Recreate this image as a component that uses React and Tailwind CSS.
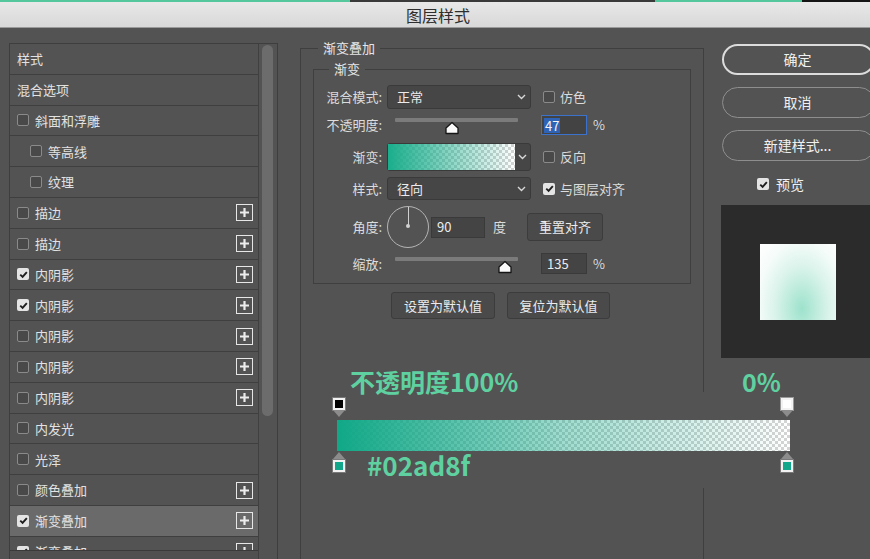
import React from 'react';

const Check = ({ on }) =>
  on ? (
    <span className="w-[12px] h-[12px] shrink-0 rounded-[2px] bg-[#e4e4e4] flex items-center justify-center">
      <svg width="9" height="9" viewBox="0 0 10 10">
        <path d="M1.4 5.2 L4 7.7 L8.7 2.3" stroke="#1e1e1e" strokeWidth="2.1" fill="none" />
      </svg>
    </span>
  ) : (
    <span className="w-[12px] h-[12px] shrink-0 rounded-[2px] border border-[#8a8a8a] bg-[#494949]" />
  );

const PlusBox = () => (
  <span className="w-[17px] h-[17px] border-[1.5px] border-[#e6e6e6] flex items-center justify-center">
    <svg width="11" height="11" viewBox="0 0 11 11">
      <path d="M5.5 1v9M1 5.5h9" stroke="#ececec" strokeWidth="2.2" />
    </svg>
  </span>
);

const Chevron = () => (
  <svg width="9" height="6" viewBox="0 0 9 6">
    <path d="M1 1 L4.5 4.5 L8 1" stroke="#d8d8d8" strokeWidth="1.4" fill="none" />
  </svg>
);

const Thumb = () => (
  <svg width="16" height="14" viewBox="0 0 16 14">
    <path d="M8 1.5 L14 7 L14 12.5 L2 12.5 L2 7 Z" fill="#fafafa" stroke="#151515" strokeWidth="1.3" strokeLinejoin="round" />
  </svg>
);

const Slider = ({ at }) => (
  <div className="relative w-[144px] h-full">
    <div className="absolute left-[8px] top-[3px] w-[123px] h-[4px] bg-[#7b7b7b] rounded-[1px]" />
    <div className={`absolute top-[6px] ${at}`}>
      <Thumb />
    </div>
  </div>
);

const rows = [
  { label: '样式' },
  { label: '混合选项' },
  { label: '斜面和浮雕', box: true },
  { label: '等高线', box: true, indent: true },
  { label: '纹理', box: true, indent: true },
  { label: '描边', box: true, plus: true },
  { label: '描边', box: true, plus: true },
  { label: '内阴影', box: true, on: true, plus: true },
  { label: '内阴影', box: true, on: true, plus: true },
  { label: '内阴影', box: true, plus: true },
  { label: '内阴影', box: true, plus: true },
  { label: '内阴影', box: true, plus: true },
  { label: '内发光', box: true },
  { label: '光泽', box: true },
  { label: '颜色叠加', box: true, plus: true },
  { label: '渐变叠加', box: true, on: true, plus: true, sel: true },
  { label: '渐变叠加', box: true, on: true, plus: true },
];

const checker =
  'bg-[repeating-conic-gradient(#d4d4d4_0_25%,#ffffff_0_50%)] bg-[length:6px_6px]';

export default function App() {
  return (
    <div className="relative w-[870px] h-[559px] overflow-hidden bg-[#535353] flex flex-col font-['Noto_Sans_CJK_SC','Liberation_Sans',sans-serif] text-[13px] text-[#e2e2e2]">
      {/* window top accent */}
      <div className="flex h-[2px] shrink-0">
        <div className="w-[350px] bg-[#55c79d]" />
        <div className="w-[305px] bg-[#3a3a3a]" />
        <div className="w-[147px] bg-[#55c79d]" />
        <div className="flex-1 bg-[#151515]" />
      </div>
      <div className="h-[26px] shrink-0 bg-gradient-to-b from-[#e8e8e8] to-[#d8d8d8] border-b border-[#9a9a9a] flex items-center justify-center text-[16px] text-[#2e2e2e] pl-[6px]">
        图层样式
      </div>

      <div className="flex flex-1 min-h-0 pl-[9px] pt-[11px]">
        {/* style list */}
        <div className="mt-[4px] w-[269px] shrink-0 border border-[#3e3e3e] flex self-start h-[530px]">
          <div className="w-[249px] flex flex-col border-r border-[#404040]">
            <div className="h-[506px] overflow-hidden flex flex-col">
              {rows.map((r, i) => (
                <div
                  key={i}
                  className={`h-[30.8px] shrink-0 flex items-center border-b border-[#3f3f3f] pr-[5px] ${
                    r.sel ? 'bg-[#6a6a6a]' : ''
                  } ${r.indent ? 'pl-[20px]' : 'pl-[7px]'}`}
                >
                  {r.box && <Check on={r.on} />}
                  <span className={r.box ? 'ml-[6px]' : ''}>{r.label}</span>
                  <div className="flex-1" />
                  {r.plus && <PlusBox />}
                </div>
              ))}
            </div>
            <div className="flex-1 border-t border-[#3a3a3a] bg-[#505050]" />
          </div>
          <div className="flex-1 px-[3px] pt-[1px]">
            <div className="w-[11px] h-[371px] rounded-full bg-[#6c6c6c]" />
          </div>
        </div>

        {/* gradient overlay settings */}
        <fieldset className="ml-[22px] w-[404px] shrink-0 h-[540px] border border-[#3f3f3f] px-[12px]">
          <legend className="ml-[5px] px-[5px] leading-[18px] text-[#e6e6e6]">渐变叠加</legend>
          <fieldset className="mt-[3px] border border-[#3f3f3f] pb-[9px]">
            <legend className="ml-[15px] px-[5px] leading-[18px] text-[#e6e6e6]">渐变</legend>
            <div className="flex flex-col pt-[7px] text-[#dcdcdc]">
              <div className="flex items-center h-[24px]">
                <span className="w-[68px] text-right">混合模式:</span>
                <div className="ml-[5px] w-[144px] h-[24px] rounded-[3px] bg-[#464646] border border-[#3a3a3a] flex items-center justify-between pl-[9px] pr-[4px]">
                  <span className="text-[#ececec]">正常</span>
                  <Chevron />
                </div>
                <div className="ml-[12px] flex items-center">
                  <Check />
                  <span className="ml-[5px]">仿色</span>
                </div>
              </div>

              <div className="flex items-center h-[20px] mt-[6px]">
                <span className="w-[68px] text-right">不透明度:</span>
                <div className="ml-[5px] h-[20px]">
                  <Slider at="left-[57px]" />
                </div>
                <div className="ml-[10px] w-[46px] h-[20px] border-[1.5px] border-[#3a72cc] bg-[#434343] flex items-center pl-[2px]">
                  <span className="bg-[#2f63b6] text-[#f4f4f4] leading-[15px] px-[1px]">47</span>
                </div>
                <span className="ml-[6px]">%</span>
              </div>

              <div className="flex items-center h-[28px] mt-[8px]">
                <span className="w-[68px] text-right">渐变:</span>
                <div className="ml-[5px] w-[144px] h-[28px] rounded-[3px] border border-[#3a3a3a] bg-[#464646] flex">
                  <div className={`w-[127px] h-full ${checker}`}>
                    <div className="h-full bg-gradient-to-r from-[#1aae8c] to-[#1aae8c00]" />
                  </div>
                  <div className="flex-1 flex items-center justify-center">
                    <Chevron />
                  </div>
                </div>
                <div className="ml-[12px] flex items-center">
                  <Check />
                  <span className="ml-[5px]">反向</span>
                </div>
              </div>

              <div className="flex items-center h-[23px] mt-[6px]">
                <span className="w-[68px] text-right">样式:</span>
                <div className="ml-[5px] w-[144px] h-[23px] rounded-[3px] bg-[#464646] border border-[#3a3a3a] flex items-center justify-between pl-[9px] pr-[4px]">
                  <span className="text-[#ececec]">径向</span>
                  <Chevron />
                </div>
                <div className="ml-[12px] flex items-center">
                  <Check on />
                  <span className="ml-[5px]">与图层对齐</span>
                </div>
              </div>

              <div className="flex items-center h-[42px] mt-[6px]">
                <span className="w-[68px] text-right">角度:</span>
                <div className="ml-[5px] w-[42px] h-[42px] rounded-full border border-[#b4b4b4] flex flex-col items-center">
                  <div className="w-[1px] h-[19px] bg-[#d0d0d0]" />
                  <div className="w-[4px] h-[4px] -mt-[2px] rounded-full bg-[#d0d0d0]" />
                </div>
                <div className="ml-[2px] w-[54px] h-[21px] bg-[#444444] border border-[#3a3a3a] flex items-center pl-[5px] text-[#ececec]">
                  90
                </div>
                <span className="ml-[8px]">度</span>
                <div className="ml-[21px] w-[76px] h-[28px] rounded-[3px] bg-[#4a4a4a] border border-[#3c3c3c] flex items-center justify-center text-[#ececec]">
                  重置对齐
                </div>
              </div>

              <div className="flex items-center h-[21px] mt-[5px]">
                <span className="w-[68px] text-right">缩放:</span>
                <div className="ml-[5px] h-[20px]">
                  <Slider at="left-[110px]" />
                </div>
                <div className="ml-[10px] w-[46px] h-[21px] bg-[#444444] border border-[#3a3a3a] flex items-center pl-[5px] text-[#ececec]">
                  135
                </div>
                <span className="ml-[6px]">%</span>
              </div>
            </div>
          </fieldset>
          <div className="flex gap-[12px] mt-[8px] pl-[78px]">
            <div className="w-[104px] h-[27px] rounded-[3px] bg-[#4a4a4a] border border-[#3c3c3c] flex items-center justify-center text-[#ececec]">
              设置为默认值
            </div>
            <div className="w-[103px] h-[27px] rounded-[3px] bg-[#4a4a4a] border border-[#3c3c3c] flex items-center justify-center text-[#ececec]">
              复位为默认值
            </div>
          </div>
        </fieldset>

        {/* buttons + preview */}
        <div className="ml-[18px] mt-[5px] w-[153px] shrink-0 flex flex-col text-[14px] text-[#f0f0f0]">
          <div className="h-[31px] rounded-[16px] border-2 border-[#dcdcdc] flex items-center justify-center pr-[2px]">
            确定
          </div>
          <div className="mt-[12px] h-[31px] rounded-[16px] border-[1.5px] border-[#8e8e8e] flex items-center justify-center pr-[2px]">
            取消
          </div>
          <div className="mt-[12px] h-[31px] rounded-[16px] border-[1.5px] border-[#8e8e8e] flex items-center justify-center pr-[2px]">
            新建样式...
          </div>
          <div className="mt-[15px] h-[16px] flex items-center pl-[35px]">
            <Check on />
            <span className="ml-[7px]">预览</span>
          </div>
          <div className="mt-[13px] -ml-[1px] h-[153px] bg-[#2b2b2b] pt-[39px] pl-[39px]">
            <div className="w-[76px] h-[76px] bg-[radial-gradient(ellipse_at_55%_85%,#9de2cc_0%,#d9f3ea_45%,#f6fcfa_75%,#ffffff_100%)]" />
          </div>
        </div>
      </div>

      {/* annotation over the dialog */}
      <div className="absolute left-[320px] top-[392px] w-[485px] h-[96px] bg-[#535353]" />
      <div className="absolute left-[350px] top-[369px] text-[25px] font-semibold leading-none text-[#5fd1a1]">
        不透明度100%
      </div>
      <div className="absolute left-[742px] top-[369px] text-[25px] font-semibold leading-none text-[#5fd1a1]">
        0%
      </div>
      <div className="absolute left-[333px] top-[398px] flex flex-col items-center">
        <div className="w-[12px] h-[12px] bg-black border-2 border-[#f2f2f2] outline outline-1 outline-[#7a7a7a]" />
        <div className="w-0 h-0 border-x-[6px] border-x-transparent border-t-[7px] border-t-[#8c8c8c]" />
      </div>
      <div className="absolute left-[781px] top-[398px] flex flex-col items-center">
        <div className="w-[12px] h-[12px] bg-white border-2 border-[#f2f2f2] outline outline-1 outline-[#9a9a9a]" />
        <div className="w-0 h-0 border-x-[6px] border-x-transparent border-t-[7px] border-t-[#8c8c8c]" />
      </div>
      <div className={`absolute left-[337px] top-[420px] w-[453px] h-[31px] ${checker}`}>
        <div className="h-full bg-gradient-to-r from-[#10a887] via-[#10a88766] to-[#10a88700]" />
      </div>
      <div className="absolute left-[333px] top-[452px] flex flex-col items-center">
        <div className="w-0 h-0 border-x-[6px] border-x-transparent border-b-[7px] border-b-[#8c8c8c]" />
        <div className="mt-[1px] w-[12px] h-[12px] bg-[#12a68b] border-2 border-[#f2f2f2] outline outline-1 outline-[#7a7a7a]" />
      </div>
      <div className="absolute left-[781px] top-[452px] flex flex-col items-center">
        <div className="w-0 h-0 border-x-[6px] border-x-transparent border-b-[7px] border-b-[#8c8c8c]" />
        <div className="mt-[1px] w-[12px] h-[12px] bg-[#12a68b] border-2 border-[#f2f2f2] outline outline-1 outline-[#7a7a7a]" />
      </div>
      <div className="absolute left-[367px] top-[452px] text-[26px] font-semibold leading-none text-[#5fd1a1]">
        #02ad8f
      </div>
    </div>
  );
}
